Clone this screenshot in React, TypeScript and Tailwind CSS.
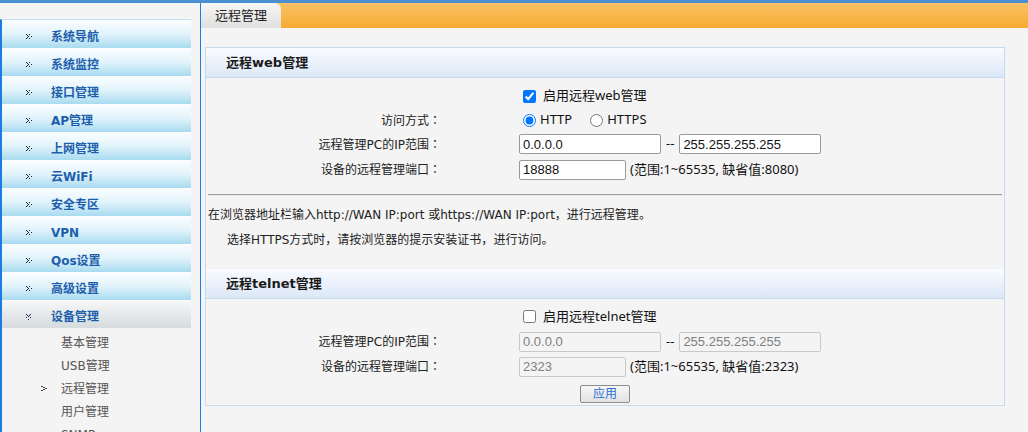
import React from 'react';

const menu = ['系统导航', '系统监控', '接口管理', 'AP管理', '上网管理', '云WiFi', '安全专区', 'VPN', 'Qos设置', '高级设置'];
const subs = ['基本管理', 'USB管理', '远程管理', '用户管理', 'SNMP'];

// dotted double chevron used in the side menu
function DotIcon({ down }: { down?: boolean }) {
  const pts = [[0, 0], [3, 0], [1, 1], [2, 2], [5, 2], [1, 3], [0, 4], [3, 4]];
  return (
    <svg width="7" height="7" viewBox="0 0 7 7" className="shrink-0">
      {pts.map(([x, y], i) => (
        <rect key={i} x={down ? y : x} y={down ? x : y} width="1" height="1" fill="#1b2440" />
      ))}
    </svg>
  );
}

function SubArrow() {
  return (
    <svg width="6" height="5" viewBox="0 0 6 5" className="shrink-0">
      <rect x="0" y="0" width="2" height="1" fill="#3b4656" />
      <rect x="2" y="1" width="2" height="1" fill="#3b4656" />
      <rect x="4" y="2" width="2" height="1" fill="#3b4656" />
      <rect x="2" y="3" width="2" height="1" fill="#3b4656" />
      <rect x="0" y="4" width="2" height="1" fill="#3b4656" />
    </svg>
  );
}

// full-width punctuation should come from the CJK face
function P({ c }: { c: string }) {
  return <span className="font-['Noto_Sans_CJK_SC',sans-serif]">{c}</span>;
}

function Row({ label, h, children }: { label?: string; h: string; children: React.ReactNode }) {
  return (
    <div className={`flex items-center ${h}`}>
      <div className="w-[235px] text-right text-[12px] text-[#222]">
        {label && (
          <>
            {label}
            <span className="font-['Noto_Sans_CJK_JP',sans-serif]">：</span>
          </>
        )}
      </div>
      <div className="ml-[78px] flex items-center text-[13px] text-[#111] font-['Noto_Sans','Noto_Sans_CJK_SC',sans-serif]">
        {children}
      </div>
    </div>
  );
}

function Field({ value, w, off }: { value: string; w: string; off?: boolean }) {
  return (
    <input
      readOnly
      disabled={off}
      value={value}
      className={`${w} h-[20px] rounded-[2px] border px-[3px] text-[13px] font-['Liberation_Sans',sans-serif] outline-none ${
        off ? 'border-[#c9c9c9] bg-[#f4f4f4] text-[#808080]' : 'border-[#9a9a9a] bg-white text-[#111]'
      }`}
    />
  );
}

function Header({ title }: { title: string }) {
  return (
    <div className="h-[30px] flex items-center pl-[20px] border-b border-[#c6dbf0] bg-gradient-to-b from-[#f9fbff] to-[#dce8f7] text-[13px] font-bold text-[#1a1a1a]">
      {title}
    </div>
  );
}

export default function App() {
  return (
    <div className="w-[1028px] h-[432px] overflow-hidden bg-[#f4f4f4] flex flex-col font-['DejaVu_Sans','Noto_Sans_CJK_SC',sans-serif] text-[12px] text-[#222]">
      <div className="h-[3px] shrink-0 bg-[#4a8fcf]" />
      <div className="flex flex-1 min-h-0">
        <aside className="w-[200px] shrink-0 pt-[16px] flex flex-col">
          <div className="w-[191px] flex-1 border-l-2 border-l-[#1e7be0] border-t border-t-[#c5dff0]">
            {menu.map((m) => (
              <div
                key={m}
                className="h-[28px] flex items-center pt-[6px] pl-[24px] bg-gradient-to-b from-[#fbfeff] via-[#e2f3fb] to-[#a8dbf0]"
              >
                <DotIcon />
                <span className="ml-[18px] font-bold text-[#1c5eac]">{m}</span>
              </div>
            ))}
            <div className="h-[28px] flex items-center pt-[6px] pl-[24px] bg-gradient-to-b from-[#f7f8f9] to-[#d5dbde]">
              <DotIcon down />
              <span className="ml-[18px] font-bold text-[#1c5eac]">设备管理</span>
            </div>
            <div className="pt-[3px]">
              {subs.map((s) => (
                <div key={s} className="h-[23px] flex items-center pl-[39px] text-[#555]">
                  <div className="w-[6px]">{s === '远程管理' && <SubArrow />}</div>
                  <span className="ml-[14px]">{s}</span>
                </div>
              ))}
            </div>
          </div>
        </aside>

        <main className="flex-1 border-l border-[#1e7be0] flex flex-col">
          <div className="h-[25px] shrink-0 flex bg-gradient-to-b from-[#f9c162] to-[#f7aa2f]">
            <div className="w-[80px] h-full flex items-center pl-[14px] rounded-tr-[6px] bg-gradient-to-b from-[#f7f7f7] to-[#dfdfdf] text-[13px] text-[#222]">
              远程管理
            </div>
          </div>

          <section className="ml-[4px] mt-[19px] w-[800px] border border-[#c6dbf0]">
            <Header title="远程web管理" />
            <div className="pt-[6px]">
              <Row h="h-[24px]">
                <input type="checkbox" defaultChecked className="m-0 ml-[4px] w-[13px] h-[13px]" />
                <span className="ml-[7px]">启用远程web管理</span>
              </Row>
              <Row label="访问方式" h="h-[24px]">
                <input type="radio" name="mode" defaultChecked className="m-0 ml-[4px] w-[13px] h-[13px]" />
                <span className="ml-[4px]">HTTP</span>
                <input type="radio" name="mode" className="m-0 ml-[18px] w-[13px] h-[13px]" />
                <span className="ml-[4px]">HTTPS</span>
              </Row>
              <Row label="远程管理PC的IP范围" h="h-[24px]">
                <Field value="0.0.0.0" w="w-[142px]" />
                <span className="mx-[5px]">--</span>
                <Field value="255.255.255.255" w="w-[142px]" />
              </Row>
              <Row label="设备的远程管理端口" h="h-[27px]">
                <Field value="18888" w="w-[107px]" />
                <span className="ml-[4px]">(范围:1~65535, 缺省值:8080)</span>
              </Row>
            </div>
            <div className="mx-[2px] mt-[11px] h-[2px] border-t border-t-[#9c9c9c] border-b border-b-[#e6e6e6]" />
            <div className="mt-[6px] leading-[24px] text-[#222]">
              <p className="pl-[2px]">
                在浏览器地址栏输入http://WAN IP:port 或https://WAN IP:port
                <P c="，" />
                进行远程管理
                <P c="。" />
              </p>
              <p className="pl-[21px]">
                选择HTTPS方式时
                <P c="，" />
                请按浏览器的提示安装证书
                <P c="，" />
                进行访问
                <P c="。" />
              </p>
            </div>

            <div className="mt-[17px]">
              <Header title="远程telnet管理" />
            </div>
            <div className="pt-[5px]">
              <Row h="h-[25px]">
                <input type="checkbox" className="m-0 ml-[4px] w-[13px] h-[13px]" />
                <span className="ml-[7px]">启用远程telnet管理</span>
              </Row>
              <Row label="远程管理PC的IP范围" h="h-[25px]">
                <Field value="0.0.0.0" w="w-[142px]" off />
                <span className="mx-[5px]">--</span>
                <Field value="255.255.255.255" w="w-[142px]" off />
              </Row>
              <Row label="设备的远程管理端口" h="h-[25px]">
                <Field value="2323" w="w-[107px]" off />
                <span className="ml-[4px]">(范围:1~65535, 缺省值:2323)</span>
              </Row>
            </div>
            <div className="flex justify-center mt-[6px] pb-[2px]">
              <button className="w-[50px] h-[18px] rounded-[2px] border border-[#8c8c8c] bg-gradient-to-b from-[#f7f7f7] to-[#e2e2e2] text-[12px] leading-[16px] text-[#2a6dd6]">
                应用
              </button>
            </div>
          </section>
        </main>
      </div>
    </div>
  );
}
